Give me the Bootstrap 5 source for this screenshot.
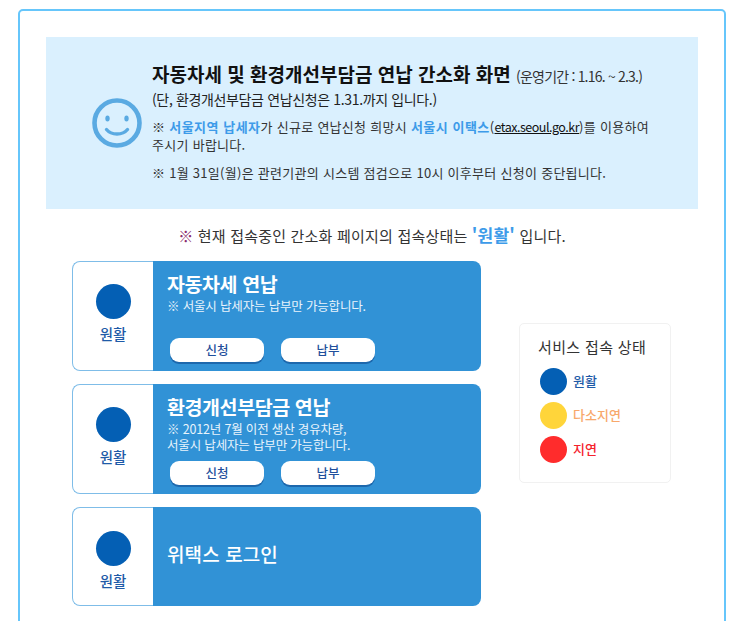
<!DOCTYPE html>
<html lang="ko">
<head>
<meta charset="utf-8">
<title>간소화 화면</title>
<link href="https://cdn.jsdelivr.net/npm/bootstrap@5.3.0/dist/css/bootstrap.min.css" rel="stylesheet">
<style>
html,body{height:621px;overflow:hidden;background:#fff}
body{font-family:"Noto Sans CJK KR","Noto Sans",sans-serif;color:#222}
.shell{margin:9px 17px 0 18px;height:640px;border:2px solid #66c6fb;border-radius:5px;padding:26px 26px 0}
.banner{background:#daf0fe;height:172px;padding-left:46px;padding-top:24px}
.smile{width:50px;height:50px;flex:none;margin-right:10px;margin-top:37px}
.ttl{font-size:19px;font-weight:700;line-height:26px;color:#111;white-space:nowrap}
.ttl small{font-size:14px;font-weight:400;letter-spacing:-.8px;color:#333}
.sub1{font-size:14px;line-height:20px;letter-spacing:-.36px;color:#222;margin-bottom:9px}
.note{font-size:13px;line-height:18px;letter-spacing:.28px;color:#333;margin-bottom:10px;white-space:nowrap}
.note b{color:#3d9be9;font-weight:700;letter-spacing:.5px}
.note u{color:#111;font-size:12.5px;letter-spacing:-.5px}
.statusline{font-size:15px;line-height:20px;text-align:center;margin-top:16px;margin-bottom:15px;color:#333;letter-spacing:.2px}
.statusline i{font-style:normal;color:#8a2a6a}
.statusline b{color:#3d9be9;font-size:17px}
.cols{padding-left:26px}
.stack{width:409px}
.svc{height:110px;margin-bottom:13px}
.svc.low{height:99px}
.lamp{width:81px;flex:none;background:#fff;border:solid #7fbde8;border-width:1.5px 0 1.5px 1.5px;border-radius:8px 0 0 8px}
.dot{border-radius:50%;display:block;flex:none;background:#045fb4}
.lamp .dot{width:35px;height:35px;margin-top:22px}
.lamp .lbl{font-size:14.5px;font-weight:500;color:#1f5ba8;margin-top:5px;line-height:20px}
.svc.low .lamp .dot{margin-top:23px}
.panel{position:relative;background:#3192d6;color:#fff;padding-left:14px;border-radius:0 8px 8px 0}
.panel h3{font-size:19.5px;font-weight:700;line-height:24px;margin:11px 0 0;letter-spacing:-.4px}
.panel p{font-size:12.5px;line-height:16px;margin:2px 0 0;letter-spacing:-.17px;color:#e9f4fc}
.btns{gap:17px;padding-left:3px;position:absolute;left:14px;bottom:9px}
.pill{width:94px;height:24px;background:#fff;border-radius:9px;box-shadow:0 2px 0 #1d68ad;font-size:12.5px;font-weight:500;color:#1f4f9c;border:0;padding:0;line-height:22px}
.panel.only{font-size:19px;font-weight:500;letter-spacing:.1px;padding-bottom:4px}
.legend{width:152px;height:160px;margin-left:38px;margin-top:62px;border:1px solid #f1f1f1;border-radius:5px;padding:12px 18px}
.legend h4{font-size:15px;font-weight:400;line-height:22px;margin:0 0 10px;color:#333;letter-spacing:.35px;white-space:nowrap}
.legend .dot{width:27px;height:27px;margin-left:2px;margin-right:6px}
.legend .rowz{height:27px;margin-bottom:7px;font-size:13px;font-weight:500}
.legend .rowz em{font-style:normal;margin-top:-2px}
.c1{color:#1f5ba8}.c2{color:#f8a86b}.c3{color:#f5222d}
.legend .y{background:#ffd53a}.legend .r{background:#ff2c2c}
</style>
</head>
<body>
<div class="shell">
  <div class="banner d-flex">
    <svg class="smile" viewBox="0 0 50 50" aria-hidden="true">
      <circle cx="25" cy="25" r="22.5" fill="none" stroke="#5aaae2" stroke-width="4.6"/>
      <ellipse cx="15.5" cy="20.5" rx="2.2" ry="3" fill="#5aaae2"/>
      <ellipse cx="34.5" cy="20.5" rx="2.2" ry="3" fill="#5aaae2"/>
      <path d="M14.5 31.5c5 6 16 6 21 0" fill="none" stroke="#5aaae2" stroke-width="3.4" stroke-linecap="round"/>
    </svg>
    <div>
      <div class="ttl">자동차세 및 환경개선부담금 연납 간소화 화면 <small>(운영기간 : 1.16. ~ 2.3.)</small></div>
      <div class="sub1">(단, 환경개선부담금 연납신청은 1.31.까지 입니다.)</div>
      <div class="note">※ <b>서울지역 납세자</b>가 신규로 연납신청 희망시 <b>서울시 이택스</b>(<u>etax.seoul.go.kr</u>)를 이용하여<br>주시기 바랍니다.</div>
      <div class="note">※ 1월 31일(월)은 관련기관의 시스템 점검으로 10시 이후부터 신청이 중단됩니다.</div>
    </div>
  </div>
  <div class="statusline"><i>※</i> 현재 접속중인 간소화 페이지의 접속상태는 <b>'원활'</b> 입니다.</div>
  <div class="cols d-flex align-items-start">
    <div class="stack">
      <div class="svc d-flex">
        <div class="lamp d-flex flex-column align-items-center"><span class="dot"></span><span class="lbl">원활</span></div>
        <div class="panel flex-grow-1">
          <h3>자동차세 연납</h3>
          <p>※ 서울시 납세자는 납부만 가능합니다.</p>
          <div class="btns d-flex"><button class="pill" type="button">신청</button><button class="pill" type="button">납부</button></div>
        </div>
      </div>
      <div class="svc d-flex">
        <div class="lamp d-flex flex-column align-items-center"><span class="dot"></span><span class="lbl">원활</span></div>
        <div class="panel flex-grow-1">
          <h3>환경개선부담금 연납</h3>
          <p>※ 2012년 7월 이전 생산 경유차량,<br>서울시 납세자는 납부만 가능합니다.</p>
          <div class="btns d-flex"><button class="pill" type="button">신청</button><button class="pill" type="button">납부</button></div>
        </div>
      </div>
      <div class="svc low d-flex">
        <div class="lamp d-flex flex-column align-items-center"><span class="dot"></span><span class="lbl">원활</span></div>
        <div class="panel only flex-grow-1 d-flex align-items-center">위택스 로그인</div>
      </div>
    </div>
    <div class="legend">
      <h4>서비스 접속 상태</h4>
      <div class="rowz d-flex align-items-center c1"><span class="dot"></span><em>원활</em></div>
      <div class="rowz d-flex align-items-center c2"><span class="dot y"></span><em>다소지연</em></div>
      <div class="rowz d-flex align-items-center c3"><span class="dot r"></span><em>지연</em></div>
    </div>
  </div>
</div>
<script src="https://cdn.jsdelivr.net/npm/bootstrap@5.3.0/dist/js/bootstrap.bundle.min.js"></script>
</body>
</html>
